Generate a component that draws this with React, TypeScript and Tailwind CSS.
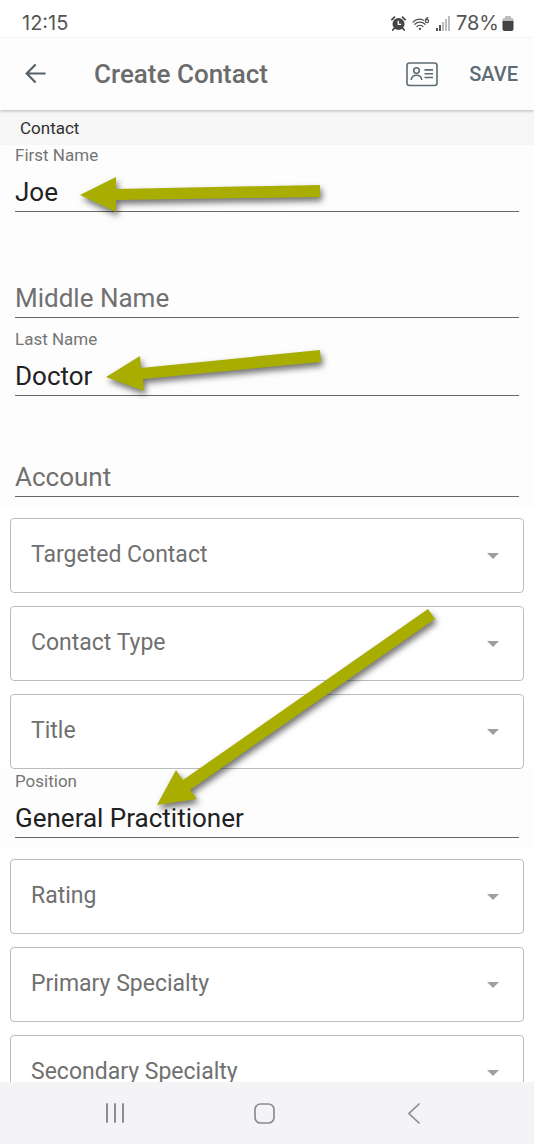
import { useState } from "react";

type FieldProps = {
  id: string;
  label: string;
  value: string;
  onChange: (value: string) => void;
  className?: string;
};

const TextField = ({ id, label, value, onChange, className }: FieldProps) => {
  return (
    <div className={`px-[15px] ${className ?? ""}`}>
      <label
        htmlFor={id}
        className={`block h-5 text-[17px] leading-5 text-[#757575] ${
          value ? "" : "opacity-0"
        }`}
      >
        {label}
      </label>
      <input
        id={id}
        type="text"
        value={value}
        placeholder={label}
        onChange={(e) => onChange(e.target.value)}
        className="block h-[47px] w-full border-b border-[#666] bg-transparent pt-2 text-[26px] text-[#212121] outline-none placeholder:text-[#707070]"
      />
    </div>
  );
};

const SelectField = ({ id, label }: { id: string; label: string }) => {
  return (
    <div className="relative mx-[10px]">
      <select
        id={id}
        defaultValue=""
        className="block h-[75px] w-full appearance-none rounded-[4px] border border-[#b9bdc0] bg-white outline-none"
      >
        <option value=""></option>
      </select>
      <label
        htmlFor={id}
        className="pointer-events-none absolute inset-y-0 left-[21px] flex items-center text-[23px] text-[#707070]"
      >
        {label}
      </label>
      <svg
        className="pointer-events-none absolute top-[35px] right-[25px]"
        width="12"
        height="6"
        viewBox="0 0 12 6"
        fill="#9aa0a4"
      >
        <path d="M0 0h12L6 6z" />
      </svg>
    </div>
  );
};

const StatusBar = () => {
  return (
    <div className="flex h-[38px] shrink-0 items-center justify-between bg-white pt-2 pr-5 pl-[22px] font-[Inter,sans-serif] text-[20px] text-[#555]">
      <span>12:15</span>
      <div className="flex items-center">
        <svg width="15" height="15" viewBox="0 0 15 15" className="mr-1.5">
          <g stroke="#444" strokeLinecap="round" fill="none">
            <path d="M.9 3.6 3.5 1.1M14.1 3.6 11.5 1.1" strokeWidth="1.8" />
            <path d="M3.2 12.2 1.8 14M11.8 12.2l1.4 1.8" strokeWidth="1.7" />
          </g>
          <circle cx="7.5" cy="8" r="6" fill="#444" />
          <path d="M7.3 4.7v3.7h2.9" stroke="#fff" strokeWidth="1.3" fill="none" />
        </svg>
        <svg width="18" height="15" viewBox="0 0 18 15" className="mr-1.5" fill="none">
          <g stroke="#505050" strokeWidth="1.2" strokeLinecap="round">
            <path d="M.9 6.1C4 2.9 8 2.5 11.6 4.2" />
            <path d="M2.7 8.3c3-2.8 7.4-2.8 10.4 0" />
            <path d="M4.9 10.5c1.8-1.5 4.2-1.5 6 0" />
            <path d="M15.9 1.6c-2 .8-2.6 2.4-2.5 3.6" />
            <circle cx="15" cy="5" r="1.6" />
          </g>
          <circle cx="7.9" cy="12.9" r="1.1" fill="#444" />
        </svg>
        <svg width="14" height="15" viewBox="0 0 14 15" className="mr-1.5">
          <path d="M0 12h2v3H0zM3 9h2v6H3z" fill="#555" />
          <path d="M6 6h2v9H6zM9 3h2v12H9zM12 0h2v15h-2z" fill="#bdbdbd" />
        </svg>
        <span>78%</span>
        <svg width="12" height="15" viewBox="0 0 12 15" className="ml-[3px]">
          <path d="M3 2V.8Q3 0 3.8 0h4.4Q9 0 9 .8V2h1q1.5 0 1.5 1.5V6H.5V3.5Q.5 2 2 2z" fill="#bbb" />
          <path d="M.5 5h11v8q0 2-2 2h-7q-2 0-2-2z" fill="#444" />
        </svg>
      </div>
    </div>
  );
};

const AppBar = () => {
  return (
    <header className="relative z-10 flex h-[72px] shrink-0 items-center bg-[#fdfdfd] pr-4 pl-[25px] shadow-[0_1px_3px_rgba(0,0,0,0.25)]">
      <button type="button" aria-label="Back" className="mr-12">
        <svg width="21" height="20" viewBox="0 0 21 20" fill="none" stroke="#53626b" strokeWidth="2.2">
          <path d="M20.6 9.5H2M10.6 .5 1.7 9.5l8.9 9.1" />
        </svg>
      </button>
      <h1 className="flex-1 text-[26px] font-medium text-[#6b6b6b]">
        Create Contact
      </h1>
      <button type="button" aria-label="Import contact" className="mr-[31px]">
        <svg width="32" height="25" viewBox="0 0 32 25" fill="none" stroke="#5d6b74" strokeWidth="1.6">
          <rect x="1" y="1" width="30" height="22.5" rx="2.5" />
          <circle cx="10.5" cy="8.5" r="2.8" />
          <path d="M5.2 18c.4-3.3 2.4-4.8 5.3-4.8s4.9 1.5 5.3 4.8" />
          <path d="M18.5 7.9H27M18.5 11.7H27M18.5 15.5H27" />
        </svg>
      </button>
      <button type="button" className="text-[20px] font-medium text-[#5d6b74]">
        SAVE
      </button>
    </header>
  );
};

const Arrows = () => {
  return (
    <svg
      className="pointer-events-none absolute top-0 left-0 drop-shadow-[2px_4px_3px_rgba(0,0,0,0.55)]"
      width="534"
      height="720"
      viewBox="0 110 534 720"
      fill="#a8ad00"
    >
      <path d="M80 195 116 177v12l204-4v12l-204 3v12z" />
      <path d="M106 377 140 356l1 12 179-18 1 12-178 17 1 12z" />
      <path d="M157 805 176 770l7 10 245-171 7 10-245 171 7 9z" />
    </svg>
  );
};

const NavBar = () => {
  return (
    <nav className="flex h-[62px] shrink-0 items-center justify-around bg-[#f4f4f7] pr-11 pl-10">
      <button type="button" aria-label="Recents">
        <svg width="20" height="20" viewBox="0 0 20 20" stroke="#8c8c8e" strokeWidth="2" strokeLinecap="round">
          <path d="M2 1v18M10 1v18M18 1v18" />
        </svg>
      </button>
      <button type="button" aria-label="Home">
        <svg width="21" height="21" viewBox="0 0 21 21" fill="none" stroke="#8c8c8e" strokeWidth="1.7">
          <rect x="1" y="1" width="19" height="19" rx="5.5" />
        </svg>
      </button>
      <button type="button" aria-label="Navigate back">
        <svg width="20" height="21" viewBox="0 0 20 21" fill="none" stroke="#8c8c8e" strokeWidth="1.7" strokeLinecap="round">
          <path d="M14 1 4 10.5 14 20" />
        </svg>
      </button>
    </nav>
  );
};

const App = () => {
  const [firstName, setFirstName] = useState<string>("Joe");
  const [middleName, setMiddleName] = useState<string>("");
  const [lastName, setLastName] = useState<string>("Doctor");
  const [account, setAccount] = useState<string>("");
  const [position, setPosition] = useState<string>("General Practitioner");

  return (
    <div className="flex h-screen flex-col overflow-hidden bg-white font-[Roboto,sans-serif]">
      <StatusBar />
      <AppBar />
      <main className="relative min-h-0 flex-1 overflow-hidden">
        <h2 className="h-[35px] bg-[#f6f6f6] pl-5 text-[17px] leading-9 text-[#303030]">
          Contact
        </h2>
        <form>
          <div className="bg-[#fdfdfd] pb-[10px]">
            <TextField
              id="firstName"
              label="First Name"
              value={firstName}
              onChange={setFirstName}
            />
            <TextField
              id="middleName"
              label="Middle Name"
              value={middleName}
              onChange={setMiddleName}
              className="pt-[39px]"
            />
            <TextField
              id="lastName"
              label="Last Name"
              value={lastName}
              onChange={setLastName}
              className="pt-[11px]"
            />
            <TextField
              id="account"
              label="Account"
              value={account}
              onChange={setAccount}
              className="pt-[34px]"
            />
          </div>
          <div className="flex flex-col gap-[13px] pt-[11px]">
            <SelectField id="targetedContact" label="Targeted Contact" />
            <SelectField id="contactType" label="Contact Type" />
            <SelectField id="title" label="Title" />
          </div>
          <div className="bg-[#fdfdfd] pb-[10px]">
            <TextField
              id="position"
              label="Position"
              value={position}
              onChange={setPosition}
              className="pt-[2px]"
            />
          </div>
          <div className="flex flex-col gap-[13px] pt-[11px]">
            <SelectField id="rating" label="Rating" />
            <SelectField id="primarySpecialty" label="Primary Specialty" />
            <SelectField id="secondarySpecialty" label="Secondary Specialty" />
          </div>
        </form>
        <Arrows />
      </main>
      <NavBar />
    </div>
  );
};

export default App;
